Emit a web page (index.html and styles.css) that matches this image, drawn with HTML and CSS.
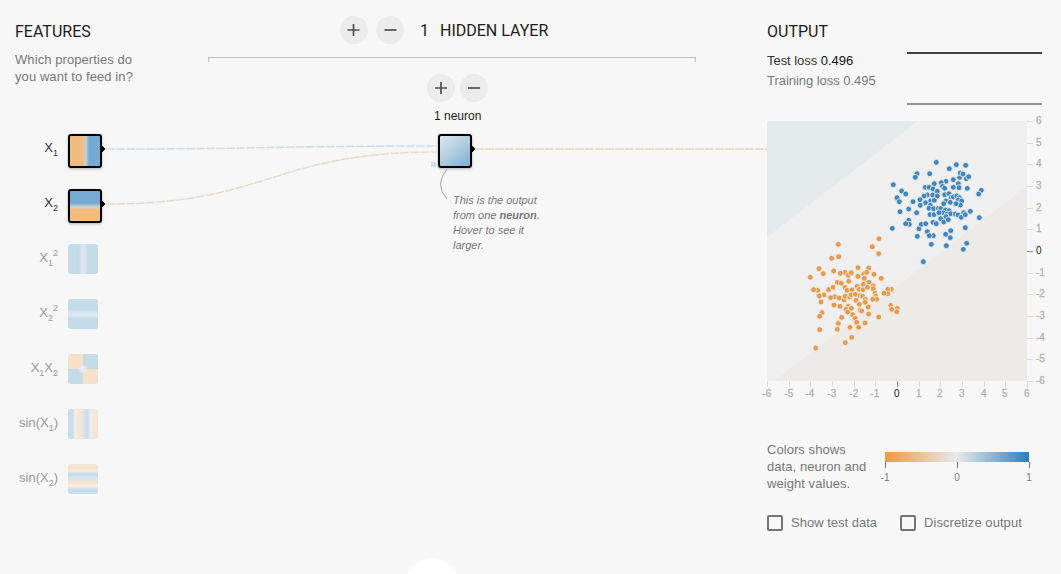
FILE: index.html
```html
<!DOCTYPE html>
<html lang="en">
<head>
<meta charset="utf-8">
<title>Neural network playground</title>
<link rel="stylesheet" href="styles.css">
</head>
<body>
<main class="playground">
  <section class="features">
    <h4 class="heading">Features</h4>
    <p class="intro">Which properties do<br>you want to feed in?</p>
    <ul class="feature-list">
      <li class="feature active"><span class="label">X<sub>1</sub></span><i class="tile x1"></i></li>
      <li class="feature active"><span class="label">X<sub>2</sub></span><i class="tile x2"></i></li>
      <li class="feature"><span class="label">X<sub>1</sub><sup>2</sup></span><i class="tile x1sq"></i></li>
      <li class="feature"><span class="label">X<sub>2</sub><sup>2</sup></span><i class="tile x2sq"></i></li>
      <li class="feature"><span class="label">X<sub>1</sub>X<sub>2</sub></span><i class="tile x1x2"></i></li>
      <li class="feature"><span class="label">sin(X<sub>1</sub>)</span><i class="tile sin1"></i></li>
      <li class="feature"><span class="label">sin(X<sub>2</sub>)</span><i class="tile sin2"></i></li>
    </ul>
  </section>

  <section class="network">
    <div class="layer-controls">
      <button class="round" aria-label="Add layer"><svg viewBox="0 0 28 28"><path d="M13.500 8v12M7.500 14h12"/></svg></button>
      <button class="round" aria-label="Remove layer"><svg viewBox="0 0 28 28"><path d="M8.500 14h12"/></svg></button>
      <span class="layer-count">1</span>
      <span class="layer-title">Hidden layer</span>
    </div>
    <div class="bracket"></div>
    <div class="neuron-controls">
      <button class="round" aria-label="Add neuron"><svg viewBox="0 0 28 28"><path d="M14 8v12M8 14h12"/></svg></button>
      <button class="round" aria-label="Remove neuron"><svg viewBox="0 0 28 28"><path d="M8 14h12"/></svg></button>
    </div>
    <p class="neuron-count">1 neuron</p>
    <i class="tile neuron"></i>
    <p class="callout">This is the output<br>from one <b>neuron</b>.<br>Hover to see it<br>larger.</p>
  </section>

  <section class="output">
    <h4 class="heading">Output</h4>
    <div class="metrics">
      <div class="losses">
        <p class="test"><span>Test loss</span> <b>0.496</b></p>
        <p class="train">Training loss 0.495</p>
      </div>
      <svg class="linechart" viewBox="0 0 135 54"><path d="M0 2H135" stroke="#3f3f3f" stroke-width="2"/><path d="M0 53H135" stroke="#929292" stroke-width="2"/></svg>
    </div>
    <svg class="heatmap" viewBox="0 0 294 290">
      <rect width="260" height="260" fill="#eeefee"/>
      <path d="M0 0H151L0 116Z" fill="#e5eaed"/>
      <path d="M260 65V260H7Z" fill="#ecebe8"/>
      <g id="axes"></g>
      <g id="points"></g>
    </svg>
    <div class="legend">
      <p>Colors shows<br>data, neuron and<br>weight values.</p>
      <div class="scale">
        <div class="ramp"></div>
        <div class="ticks"><span>-1</span><span>0</span><span>1</span></div>
      </div>
    </div>
    <div class="options">
      <label class="option"><i class="box"></i>Show test data</label>
      <label class="option"><i class="box"></i>Discretize output</label>
    </div>
  </section>

  <svg class="links" viewBox="0 0 1061 574">
    <g fill="none" stroke-dasharray="9 1">
      <path d="M106 149C270 149 270 146 438 146" stroke="#cfdfe9" stroke-width="1.6"/>
      <path d="M106 204C271 204 271 152 438 152" stroke="#e9dccb" stroke-width="1.5"/>
      <path d="M475 149H767" stroke="#ecdec7" stroke-width="1.8"/>
    </g>
    <path d="M102 146L105 149L102 152ZM102 201L105 204L102 207ZM472 146L475 149L472 152Z" stroke="#000"/>
    <rect x="431" y="162" width="5" height="5" fill="#d0dfe4"/>
    <path d="M447 169Q434 185 447 199" fill="none" stroke="#a5a5a5"/>
  </svg>
  <div class="scroll-hint"></div>
</main>
<script src="plot.js"></script>
</body>
</html>
```
FILE: styles.css
```css
* { box-sizing: border-box; }
body {
  margin: 0;
  background: #f7f7f7;
  color: #777;
  font: 13px/17px "Liberation Sans", Arial, sans-serif;
}
p, h4, ul { margin: 0; padding: 0; }
.playground {
  position: relative;
  display: grid;
  grid-template-columns: 193px 488px 365px;
  padding-left: 15px;
  height: 574px;
  overflow: hidden;
}
.output { margin-left: 71px; width: 294px; }
.heading {
  padding-top: 22px;
  font: 400 16px/19px Roboto, sans-serif;
  text-transform: uppercase;
  color: #1c1c1c;
}
.intro { margin-top: 10px; height: 34px; letter-spacing: .08px; }

.feature-list { list-style: none; margin-top: 49px; }
.feature { display: flex; height: 55px; color: #999; }
.label { width: 43px; margin-right: 10px; padding-top: 4px; line-height: 20px; text-align: right; white-space: nowrap; }
.label sub, .label sup { font-size: 9px; line-height: 0; }
.label sub { vertical-align: -4px; }
.label sup { vertical-align: 6px; }
.active .label { color: #333; }
.tile { display: block; width: 30px; height: 30px; border-radius: 3px; flex: none; }
.active .tile, .neuron {
  width: 34px;
  height: 34px;
  border: 2px solid #000;
  box-shadow: 0 1px 3px rgba(0, 0, 0, .28);
}
.x1 { background: linear-gradient(90deg, #f0bc80 40%, #e7cba6 47%, #b6ceda 54%, #76aad2 64%); }
.x2 { background: linear-gradient(#76aad2 40%, #a9c8dc 49%, #e7cba6 54%, #f0bc80 64%); }
.x1sq { background: linear-gradient(90deg, #c4dbe8 36%, #d9e5ef 46%, #d9e5ef 56%, #c4dbe8 66%); }
.x2sq { background: linear-gradient(#c4dbe8 36%, #d9e5ef 46%, #d9e5ef 56%, #c4dbe8 66%); }
.x1x2 {
  background:
    radial-gradient(circle, #e9edf0 2px, transparent 5px),
    conic-gradient(#c4dbe8 0 25%, #f6e1c8 0 50%, #c4dbe8 0 75%, #f6e1c8 0);
}
.sin1 { background: linear-gradient(90deg, #cadeea 16%, #edf0f0 24%, #f8e5d1 34%, #f5e6d5 42%, #dce5e9 51%, #c5dcec 64%, #eaf0f3 76%, #f8e5d1 86%); }
.sin2 { background: linear-gradient(#f6e4d0 16%, #f3ebe2 23%, #c3dbea 35%, #dce5e9 48%, #f7e1cd 62%, #f5eee6 75%, #c9deec 84%); }

.network { display: flex; flex-direction: column; }
.layer-controls { display: flex; align-items: center; margin: 16px 0 0 132px; height: 28px; color: #1c1c1c; font: 16px/19px Roboto, sans-serif; }
.round { display: block; width: 28px; height: 28px; padding: 0; border: 0; border-radius: 50%; background: #ececec; }
.round + .round { margin-left: 8px; }
.round svg { display: block; width: 28px; height: 28px; fill: none; stroke: #505050; stroke-width: 1.7; }
.layer-count { margin-left: 16px; width: 20px; }
.layer-title { text-transform: uppercase; }
.bracket { margin-top: 13px; height: 5px; border: 1px solid #bfbfbf; border-bottom: 0; }
.neuron-controls { display: flex; margin: 12px 0 0 219px; }
.neuron-controls .round + .round { margin-left: 5px; }
.neuron-count { margin: 6px 0 0 226px; font-size: 12px; color: #1c1c1c; }
.neuron { margin: 9px 0 0 230px; background: linear-gradient(140deg, #dbe6ed, #afcde0 50%, #7baed4); }
.callout { margin: 25px 0 0 245px; font-size: 11px; line-height: 15px; font-style: italic; }

.metrics { display: flex; justify-content: space-between; width: 275px; margin-top: 9px; }
.losses { padding-top: 2px; line-height: 17px; letter-spacing: -.04px; }
.test, .test b { color: #111; font-weight: 400; }
.test span { color: #333; }
.train { margin-top: 3px; }
.linechart { width: 135px; height: 54px; margin-top: 1px; }
.heatmap { display: block; width: 294px; height: 290px; margin-top: 16px; overflow: visible; }
.heatmap text { font: 10px "Liberation Sans", Arial, sans-serif; fill: #b2b2b2; stroke: #b2b2b2; stroke-width: .3px; }
.heatmap .zero text { fill: #222; stroke: none; }
.heatmap line { stroke: #ddd; }
.heatmap .zero line { stroke: #888; }
.orange { fill: #e8994c; }
.blue { fill: #3f85c0; }
#points circle { stroke: #f3f3f1; stroke-width: .8; }

.legend { display: flex; margin-top: 30px; }
.legend p { width: 118px; white-space: nowrap; letter-spacing: .06px; }
.scale { width: 144px; padding-top: 11px; }
.ramp { height: 10px; background: linear-gradient(90deg, #e99a49, #e8eaeb 50%, #327dba); }
.ticks { display: flex; justify-content: space-between; margin: 0 -10px; font-size: 10px; line-height: 12px; }
.ticks span { width: 20px; text-align: center; }
.ticks span::before { content: ""; display: block; width: 1px; height: 6px; margin: 0 auto 4px; background: #777; }
.options { display: flex; gap: 23px; margin-top: 22px; }
.option { display: flex; align-items: center; line-height: 17px; white-space: nowrap; }
.option + .option { letter-spacing: .06px; }
.box { width: 16px; height: 16px; margin-right: 8px; border: 2px solid #757575; border-radius: 2px; }

.links { position: absolute; left: 0; top: 0; width: 1061px; height: 574px; pointer-events: none; }
.scroll-hint { position: absolute; left: 405px; top: 558px; width: 54px; height: 54px; border-radius: 50%; background: #fff; }
```
FILE: plot.js
```js
const NS = "http://www.w3.org/2000/svg";
const add = (parent, tag, attrs, text) => {
  const el = document.createElementNS(NS, tag);
  for (const k in attrs) el.setAttribute(k, attrs[k]);
  if (text !== undefined) el.textContent = text;
  return parent.appendChild(el);
};

const axes = document.getElementById("axes");
for (let v = -6; v <= 6; v++) {
  const p = Math.round((v + 6) * 260 / 12) + 0.5, q = Math.round((6 - v) * 260 / 12) + 0.5;
  const g = add(axes, "g", v === 0 ? { class: "zero" } : {});
  add(g, "line", { x1: p, x2: p, y1: 260, y2: 266 });
  add(g, "text", { x: p - 0.7, y: 276, "text-anchor": "middle" }, v);
  add(g, "line", { x1: 260, x2: 266, y1: q, y2: q });
  add(g, "text", { x: 269, y: q + 2.7 }, v);
}

// Each group holds samples in thirds of a pixel from its own origin.
const samples = [
  ["blue", 93, 24, "229,52 209,86 171,86 166,97 100,119 125,138 137,147 111,158 118,170 159,170 146,192 120,200 170,203 146,226 148,238 137,236 97,250 177,251 172,274 184,238 197,236 219,232 229,236 202,260 220,272 208,272 214,298 190,350 223,116 196,127 207,127 219,132 232,139 202,150 192,153 218,150 233,153 180,164 197,173 212,168 223,166 181,181 211,181 207,190 221,191 235,190 210,209 222,209 236,204"],
  ["blue", 163, 24, "79,59 107,61 58,71 89,97 91,84 99,87 109,101 116,95 70,104 48,109 34,113 85,116 38,124 44,130 22,139 22,153 87,128 70,127 112,130 154,136 146,147 44,149 57,146 64,157 70,156 80,153 88,158 85,165 95,168 48,168 41,176 61,172 91,180 78,176 32,191 46,195 57,197 39,203 27,203 52,207 62,206 76,207 84,210 94,217 101,203 106,209 121,199 32,221 48,215 41,231 55,224 148,218 106,248 62,257 47,268 61,278 49,302 110,295 100,313"],
  ["orange", 33, 109, "115,43 116,80 95,85 57,116 70,131 101,123 31,142 135,127 121,130 154,128 145,136 53,181 41,179 72,195 58,198 63,216 86,179 99,172 112,157 124,160 146,154 135,172 141,181 104,200 92,203 118,204 102,225 120,229 132,210 136,199 149,201 66,248 59,259 59,299 47,354 112,298 115,280 125,262 145,229 154,235 138,238 143,246 136,338"],
  ["orange", 83, 109, "87,26 67,50 86,71 24,113 56,114 4,128 41,132 24,139 50,127 43,145 72,133 94,145 40,163 57,157 21,169 6,180 27,178 39,179 52,172 70,167 70,176 4,194 16,193 31,197 38,199 18,211 46,208 28,223 46,217 75,190 77,199 80,208 68,208 55,231 4,235 30,240 35,243 56,252 86,261 8,254 16,265 20,277 45,279 26,292 0,292 5,322 124,178 113,178 113,191 102,190 122,226 125,238 142,235 140,245"]
];
const points = document.getElementById("points");
for (const [cls, ox, oy, list] of samples)
  for (const pair of list.split(" ")) {
    const [x, y] = pair.split(",").map(Number);
    add(points, "circle", { class: cls, cx: (ox + x / 3).toFixed(1), cy: (oy + y / 3).toFixed(1), r: 2.9 });
  }
```
